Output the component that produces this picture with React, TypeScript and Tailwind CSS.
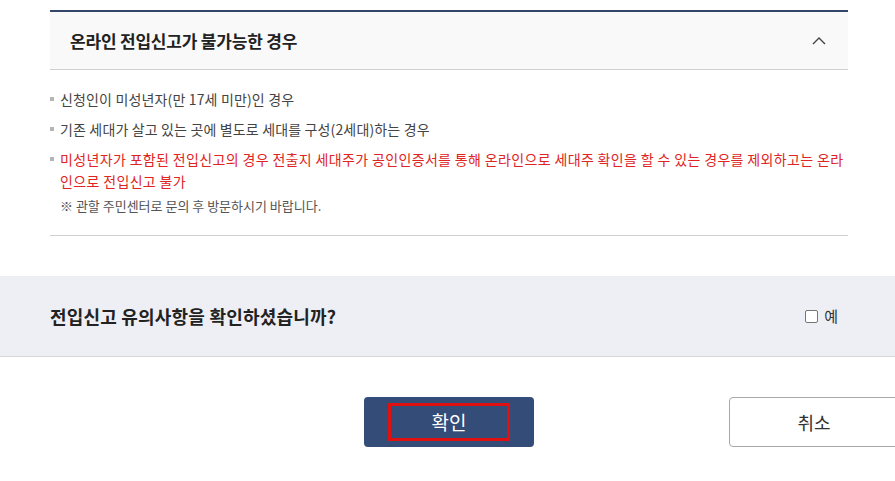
import React from "react";

const font = { fontFamily: '"Noto Sans CJK KR", "Noto Sans", sans-serif' };

const Bullet = () => (
  <span className="mt-[9px] mr-[6px] h-[4px] w-[4px] shrink-0 bg-[#b5b5b5]" />
);

export default function App() {
  return (
    <div className="h-[481px] w-[895px] overflow-hidden bg-white" style={font}>
      <div className="pl-[50px] pr-[47px] pt-[10px]">
        <div className="border-t-2 border-[#34476b]">
          <div className="flex h-[58px] items-center justify-between border-b border-[#cfcfcf] bg-[#f9f9f9] pl-[20px] pr-[22px]">
            <h3 className="text-[17px] font-bold tracking-[-0.2px] text-[#222]">
              온라인 전입신고가 불가능한 경우
            </h3>
            <svg width="14" height="9" viewBox="0 0 14 9" fill="none">
              <path d="M1 8L7 2L13 8" stroke="#444" strokeWidth="1.4" />
            </svg>
          </div>
          <ul className="flex flex-col gap-[8px] border-b border-[#cfcfcf] pb-[18px] pt-[18px] text-[14px] leading-[22px] tracking-[0.15px] text-[#444]">
            <li className="flex">
              <Bullet />
              <span>신청인이 미성년자(만 17세 미만)인 경우</span>
            </li>
            <li className="flex">
              <Bullet />
              <span>기존 세대가 살고 있는 곳에 별도로 세대를 구성(2세대)하는 경우</span>
            </li>
            <li className="flex">
              <Bullet />
              <div>
                <p className="tracking-[0.35px] text-[#e02424]">
                  미성년자가 포함된 전입신고의 경우 전출지 세대주가 공인인증서를 통해 온라인으로 세대주 확인을 할 수 있는 경우를 제외하고는 온라인으로 전입신고 불가
                </p>
                <p className="mt-[3px] text-[13px] tracking-[0px] text-[#555]">
                  ※ 관할 주민센터로 문의 후 방문하시기 바랍니다.
                </p>
              </div>
            </li>
          </ul>
        </div>
      </div>

      <div className="mt-[40px] flex h-[81px] items-center justify-between border-b border-[#d6d6d6] bg-[#eeeff4] pl-[50px] pr-[57px]">
        <h3 className="text-[18px] font-bold tracking-[0.2px] text-[#222]">
          전입신고 유의사항을 확인하셨습니까?
        </h3>
        <label className="flex items-center gap-[6px] text-[15px] text-[#333]">
          <span className="h-[13px] w-[13px] rounded-[2px] border border-[#767676] bg-white" />
          예
        </label>
      </div>

      <div className="mt-[40px] flex gap-[195px] pl-[364px]">
        <button className="flex h-[50px] w-[170px] shrink-0 items-center justify-center rounded-[4px] bg-[#344c78]">
          <span className="flex h-[38px] w-[122px] items-center justify-center border-[3px] border-[#e01010] text-[19px] text-white">
            확인
          </span>
        </button>
        <button className="flex h-[50px] w-[170px] shrink-0 items-center justify-center rounded-[4px] border border-[#a8a8a8] bg-white text-[18px] text-[#333]">
          취소
        </button>
      </div>
    </div>
  );
}
